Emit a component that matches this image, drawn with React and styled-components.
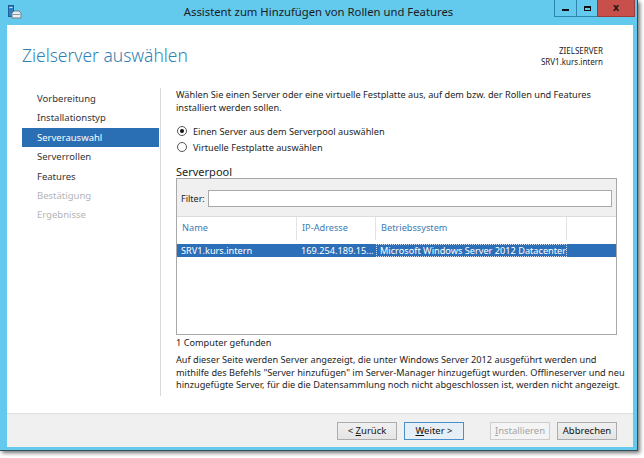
import React from 'react';
import styled, { createGlobalStyle } from 'styled-components';

const Global = createGlobalStyle`
  html, body { margin: 0; padding: 0; background: #ffffff; }
  body {
    width: 644px; height: 458px; overflow: hidden;
    font-family: "Segoe UI", "Noto Sans", sans-serif;
    color: #1e1e1e;
  }
`;

const Window = styled.div`
  width: 638px;
  height: 451px;
  box-sizing: border-box;
  background: #63c9ed;
  border-right: 1px solid #33505c;
  border-bottom: 1px solid #33505c;
  box-shadow: 2px 2px 4px rgba(0, 0, 0, 0.55);
  display: flex;
  flex-direction: column;
`;

const TitleBar = styled.div`
  height: 25px;
  flex: none;
  display: grid;
  grid-template-columns: 1fr auto 1fr;
  align-items: start;
`;

const AppIcon = styled.div`
  padding: 5px 0 0 8px;
  line-height: 0;
`;

const TitleText = styled.div`
  font-size: 11.3px;
  line-height: 24px;
  color: #1c1c1c;
  white-space: nowrap;
`;

const Controls = styled.div`
  justify-self: end;
  display: flex;
  margin-right: 2px;
`;

const CtrlButton = styled.div`
  width: ${p => p.$w}px;
  height: 17px;
  box-sizing: border-box;
  background: ${p => (p.$close ? '#c7504a' : '#63c9ed')};
  border: 1px solid ${p => (p.$close ? '#9c3a35' : '#2f86ad')};
  border-top: none;
  margin-left: -1px;
  display: flex;
  align-items: center;
  justify-content: center;
`;

const MinGlyph = styled.div`
  width: 7px;
  height: 2px;
  background: #111;
  margin-top: 4px;
`;

const MaxGlyph = styled.div`
  width: 7px;
  height: 5px;
  box-sizing: border-box;
  border: 1px solid #111;
  border-top-width: 2px;
`;

const CloseGlyph = styled.div`
  font-family: "DejaVu Sans", sans-serif;
  font-weight: bold;
  font-size: 10px;
  line-height: 10px;
  color: #1a1a1a;
`;

const Client = styled.div`
  flex: 1;
  margin: 0 4px 3px 7px;
  background: #ffffff;
  display: flex;
  flex-direction: column;
  min-width: 0;
`;

const Header = styled.div`
  height: 63px;
  flex: none;
  box-sizing: border-box;
  display: flex;
  justify-content: space-between;
  align-items: flex-start;
  padding: 19px 30px 0 15px;
`;

const Heading = styled.h1`
  margin: 0;
  font-size: 17.4px;
  line-height: 22px;
  font-weight: 300;
  color: #2f82b3;
  white-space: nowrap;
`;

const ServerInfo = styled.div`
  margin-top: 1px;
  font-size: 8px;
  line-height: 11px;
  text-align: right;
  color: #222;
`;

const Body = styled.div`
  flex: 1;
  display: flex;
  min-height: 0;
`;

const Nav = styled.nav`
  width: 139px;
  flex: none;
  box-sizing: border-box;
  margin: 0 0 17px 15px;
  padding-top: 1px;
  border-right: 1px solid #d9d9d9;
`;

const NavItem = styled.div`
  height: 19.4px;
  line-height: 19.4px;
  margin-right: 1px;
  padding-left: 15px;
  font-size: 9.5px;
  white-space: nowrap;
  background: ${p => (p.$active ? '#2a6eb4' : 'transparent')};
  color: ${p => (p.$active ? '#ffffff' : p.$disabled ? '#b4b4b4' : '#333333')};
`;

const Content = styled.div`
  flex: none;
  width: 441px;
  min-width: 0;
  margin-left: 15px;
  font-size: 9.2px;
  display: flex;
  flex-direction: column;
`;

const TextBlock = styled.div`
  margin-top: ${p => p.$top || 0}px;
  line-height: ${p => p.$lh || 13}px;
`;

const Line = styled.div`
  white-space: nowrap;
`;

const RadioGroup = styled.div`
  margin-top: 9px;
  display: flex;
  flex-direction: column;
`;

const RadioRow = styled.label`
  height: 16px;
  display: flex;
  align-items: center;
  white-space: nowrap;
`;

const RadioCircle = styled.span`
  width: 10px;
  height: 10px;
  box-sizing: border-box;
  margin-left: 1px;
  margin-right: 6px;
  border: 1px solid #555;
  border-radius: 50%;
  background: #fff;
  display: flex;
  align-items: center;
  justify-content: center;
  &::after {
    content: '';
    width: 4px;
    height: 4px;
    border-radius: 50%;
    background: ${p => (p.$checked ? '#111' : 'transparent')};
  }
`;

const GroupLabel = styled.div`
  margin-top: 10px;
  font-size: 11px;
  line-height: 13px;
  color: #222;
`;

const ListBox = styled.div`
  height: 157px;
  box-sizing: border-box;
  border: 1px solid #a9a9a9;
  display: flex;
  flex-direction: column;
`;

const FilterBar = styled.div`
  height: 38px;
  flex: none;
  box-sizing: border-box;
  background: #f0f0f0;
  border-bottom: 1px solid #dcdcdc;
  display: flex;
  align-items: center;
  padding: 2px 4px 0 4px;
`;

const FilterLabel = styled.span`
  width: 27px;
  flex: none;
  font-size: 9px;
`;

const FilterInput = styled.div`
  flex: 1;
  height: 17px;
  box-sizing: border-box;
  border: 1px solid #a9a9a9;
  background: #fff;
`;

const Cols = '120px 79px 191px 1fr';

const HeadRow = styled.div`
  height: 25px;
  flex: none;
  display: grid;
  grid-template-columns: ${Cols};
`;

const HeadCell = styled.div`
  padding: 0 5px;
  line-height: 22px;
  color: #3c7bb3;
  border-right: ${p => (p.$last ? 'none' : '1px solid #e3e3e3')};
  margin-bottom: 2px;
  white-space: nowrap;
`;

const DataRow = styled.div`
  margin-top: 2px;
  height: 13px;
  display: grid;
  grid-template-columns: ${Cols};
  background: ${p => (p.$selected ? '#2b6fb9' : 'transparent')};
  color: ${p => (p.$selected ? '#ffffff' : '#222')};
`;

const DataCell = styled.div`
  padding: 0 4px;
  line-height: 13px;
  white-space: nowrap;
  overflow: hidden;
  box-sizing: border-box;
  outline: ${p => (p.$focus ? '1px dotted #cfdcec' : 'none')};
  outline-offset: -1px;
`;

const Footer = styled.div`
  height: 34px;
  flex: none;
  box-sizing: border-box;
  background: #f0f0f0;
  border-top: 1px solid #dfdfdf;
  display: flex;
  justify-content: flex-end;
  align-items: center;
  padding-right: 16px;
`;

const Button = styled.div`
  width: 60px;
  height: 18px;
  box-sizing: border-box;
  margin-left: ${p => p.$gap || 0}px;
  border: 1px solid ${p => (p.$focus ? '#4a8fc9' : p.$disabled ? '#cdcdcd' : '#acacac')};
  background: ${p => (p.$disabled ? '#f4f4f4' : p.$focus ? '#e6eef6' : 'linear-gradient(#f0f0f0, #e4e4e4)')};
  color: ${p => (p.$disabled ? '#a3a3a3' : '#111')};
  font-size: 9.5px;
  line-height: 16px;
  text-align: center;
  white-space: nowrap;
  & u { text-decoration-thickness: 1px; text-underline-offset: 1px; }
`;

function Icon() {
  return (
    <svg width="14" height="14" viewBox="0 0 14 14">
      <rect x="0.5" y="0.5" width="5" height="11" fill="#2d7fc4" stroke="#1d5f99" />
      <rect x="1.5" y="2" width="3" height="1" fill="#bfe3fa" />
      <path d="M4 8 L6 6 H11 L13 8 V13 H4 Z" fill="#e9eef2" stroke="#6f7f8a" />
      <rect x="5" y="9" width="7" height="1" fill="#8a9aa6" />
    </svg>
  );
}

const steps = [
  { t: 'Vorbereitung' },
  { t: 'Installationstyp' },
  { t: 'Serverauswahl', active: true },
  { t: 'Serverrollen' },
  { t: 'Features' },
  { t: 'Bestätigung', disabled: true },
  { t: 'Ergebnisse', disabled: true },
];

const descLines = [
  'Wählen Sie einen Server oder eine virtuelle Festplatte aus, auf dem bzw. der Rollen und Features',
  'installiert werden sollen.',
];

const noteLines = [
  'Auf dieser Seite werden Server angezeigt, die unter Windows Server 2012 ausgeführt werden und',
  'mithilfe des Befehls "Server hinzufügen" im Server-Manager hinzugefügt wurden. Offlineserver und neu',
  'hinzugefügte Server, für die die Datensammlung noch nicht abgeschlossen ist, werden nicht angezeigt.',
];

export default function App() {
  return (
    <>
      <Global />
      <Window>
        <TitleBar>
          <AppIcon><Icon /></AppIcon>
          <TitleText>Assistent zum Hinzufügen von Rollen und Features</TitleText>
          <Controls>
            <CtrlButton $w={23}><MinGlyph /></CtrlButton>
            <CtrlButton $w={22}><MaxGlyph /></CtrlButton>
            <CtrlButton $w={38} $close><CloseGlyph>x</CloseGlyph></CtrlButton>
          </Controls>
        </TitleBar>
        <Client>
          <Header>
            <Heading>Zielserver auswählen</Heading>
            <ServerInfo>ZIELSERVER<br />SRV1.kurs.intern</ServerInfo>
          </Header>
          <Body>
            <Nav>
              {steps.map(s => (
                <NavItem key={s.t} $active={s.active} $disabled={s.disabled}>{s.t}</NavItem>
              ))}
            </Nav>
            <Content>
              <TextBlock>
                {descLines.map(l => <Line key={l}>{l}</Line>)}
              </TextBlock>
              <RadioGroup>
                <RadioRow><RadioCircle $checked />Einen Server aus dem Serverpool auswählen</RadioRow>
                <RadioRow><RadioCircle />Virtuelle Festplatte auswählen</RadioRow>
              </RadioGroup>
              <GroupLabel>Serverpool</GroupLabel>
              <ListBox>
                <FilterBar>
                  <FilterLabel>Filter:</FilterLabel>
                  <FilterInput />
                </FilterBar>
                <HeadRow>
                  <HeadCell>Name</HeadCell>
                  <HeadCell>IP-Adresse</HeadCell>
                  <HeadCell>Betriebssystem</HeadCell>
                  <HeadCell $last />
                </HeadRow>
                <DataRow $selected>
                  <DataCell>SRV1.kurs.intern</DataCell>
                  <DataCell>169.254.189.15...</DataCell>
                  <DataCell $focus>Microsoft Windows Server 2012 Datacenter</DataCell>
                  <DataCell />
                </DataRow>
              </ListBox>
              <TextBlock $top={1} $lh={14}>
                <Line>1 Computer gefunden</Line>
              </TextBlock>
              <TextBlock $top={4} $lh={12.7}>
                {noteLines.map(l => <Line key={l}>{l}</Line>)}
              </TextBlock>
            </Content>
          </Body>
          <Footer>
            <Button>&lt; <u>Z</u>urück</Button>
            <Button $gap={7} $focus><u>W</u>eiter &gt;</Button>
            <Button $gap={26} $disabled><u>I</u>nstallieren</Button>
            <Button $gap={7}>Abbrechen</Button>
          </Footer>
        </Client>
      </Window>
    </>
  );
}
